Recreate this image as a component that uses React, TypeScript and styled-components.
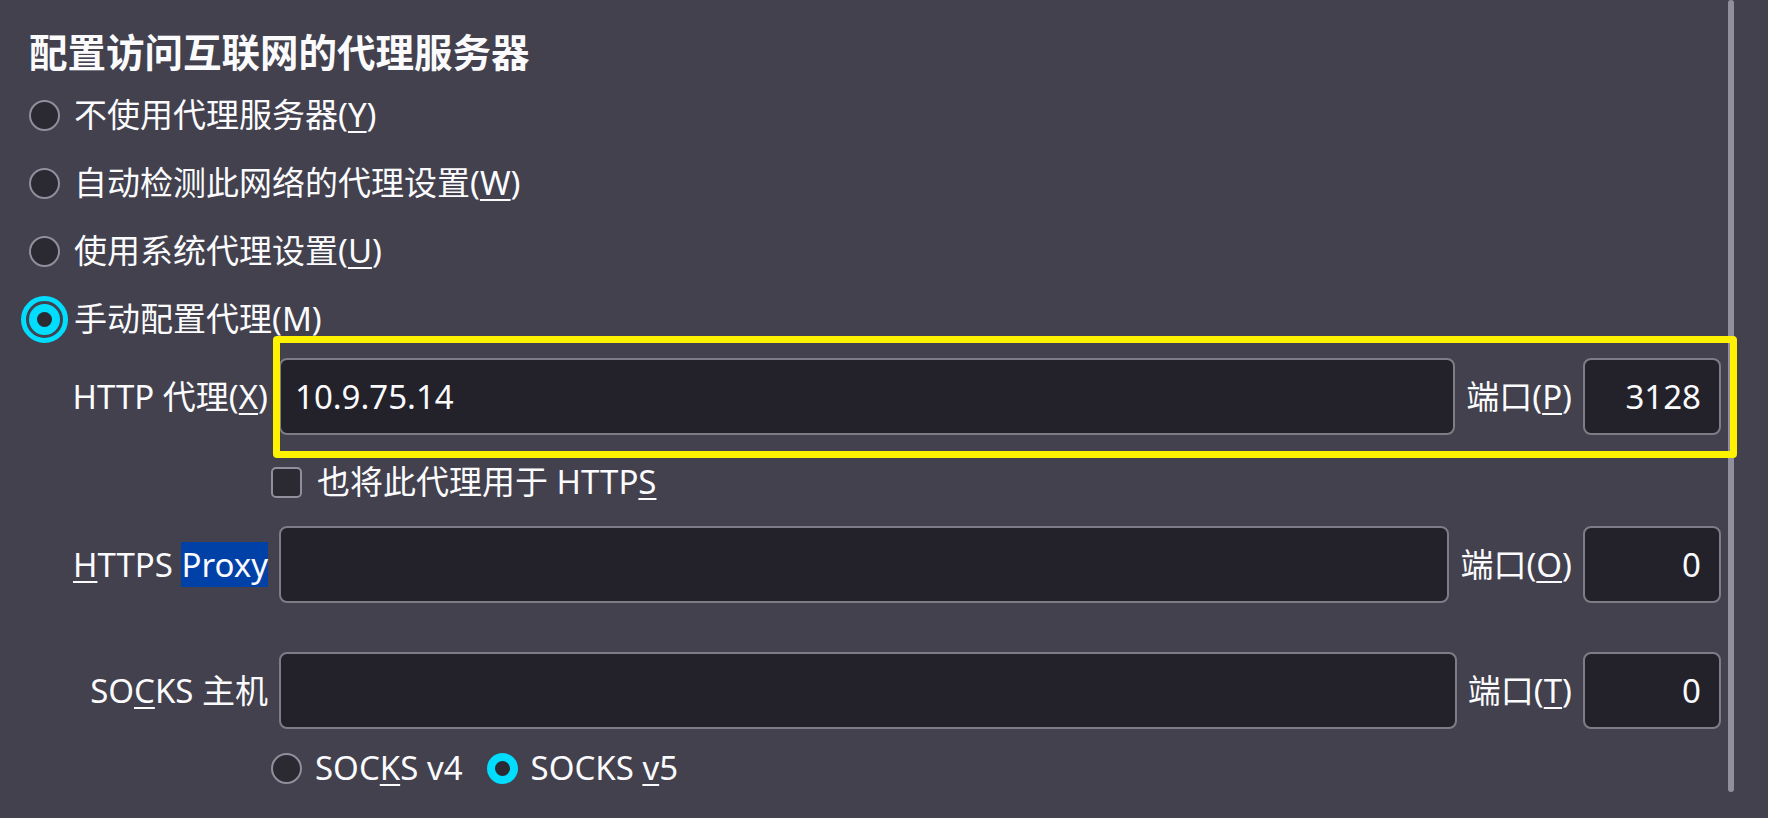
import React from "react";
import styled, { createGlobalStyle } from "styled-components";

const GlobalStyle = createGlobalStyle`
  html, body {
    margin: 0;
    padding: 0;
    background: #42414d;
  }
  body {
    font-family: "Noto Sans", "Noto Sans CJK SC", sans-serif;
    color: #fbfbfe;
    overflow: hidden;
  }
  #root {
    height: 818px;
  }
`;

const Page = styled.div`
  display: flex;
  width: 1768px;
  height: 818px;
  background: #42414d;
  overflow: hidden;
`;

const Content = styled.main`
  flex: 1;
  min-width: 0;
  display: flex;
  flex-direction: column;
  padding: 27px 7px 0 29px;
`;

const ScrollTrack = styled.div`
  width: 6px;
  margin-right: 34px;
  display: flex;
  flex-direction: column;
`;

const ScrollThumb = styled.div`
  height: 792px;
  border-radius: 3px;
  background: #8f8f9d;
`;

const Heading = styled.h2`
  margin: 0;
  font-size: 38.5px;
  line-height: 50px;
  font-weight: 600;
  white-space: nowrap;
`;

const RadioGroup = styled.div`
  display: flex;
  flex-direction: column;
  margin-top: 4px;
`;

const OptionRow = styled.label`
  display: flex;
  align-items: center;
  gap: 14px;
  height: 68px;
  font-size: 33px;
  line-height: 42px;
  white-space: nowrap;
`;

const RadioDot = styled.span<{ $checked?: boolean; $focused?: boolean }>`
  flex: none;
  display: inline-flex;
  align-items: center;
  justify-content: center;
  box-sizing: border-box;
  width: 31px;
  height: 31px;
  border-radius: 50%;
  border: 2px solid ${(p) => (p.$checked ? "#00ddff" : "#8f8f9d")};
  background: ${(p) => (p.$checked ? "#00ddff" : "#2b2a33")};
  outline: ${(p) => (p.$focused ? "5px solid #00ddff" : "none")};
  outline-offset: 3.5px;

  &::after {
    content: "";
    display: ${(p) => (p.$checked ? "block" : "none")};
    width: 15px;
    height: 15px;
    border-radius: 50%;
    background: #2b2a33;
  }
`;

const Key = styled.span`
  text-decoration: underline;
  text-decoration-thickness: 2px;
  text-underline-offset: 4px;
`;

const FieldRow = styled.div<{ $mt?: number }>`
  position: relative;
  display: flex;
  align-items: center;
  gap: 11px;
  margin-top: ${(p) => p.$mt ?? 0}px;
`;

const FieldLabel = styled.label`
  flex: none;
  width: 239px;
  text-align: right;
  font-size: 33px;
  line-height: 42px;
  white-space: nowrap;
`;

const Selected = styled.span`
  background: #0041a8;
`;

const TextInput = styled.input<{ $align?: "left" | "right" }>`
  box-sizing: border-box;
  height: 77px;
  margin: 0;
  border: 2px solid #7e7d87;
  border-radius: 8px;
  background: #23222b;
  color: #fbfbfe;
  font-family: "Noto Sans", "Noto Sans CJK SC", sans-serif;
  font-size: 33px;
  text-align: ${(p) => p.$align ?? "left"};
  outline: none;
`;

const HostInput = styled(TextInput)`
  flex: 1;
  min-width: 0;
  padding: 0 14px;
`;

const PortInput = styled(TextInput)`
  flex: none;
  width: 138px;
  padding: 0 18px 0 10px;
`;

const PortLabel = styled.label`
  flex: none;
  font-size: 33px;
  line-height: 42px;
  white-space: nowrap;
`;

const Annotation = styled.div`
  position: absolute;
  left: 244px;
  right: -16px;
  top: -22px;
  bottom: -23px;
  border: 7px solid #fff200;
  border-radius: 4px;
  pointer-events: none;
  z-index: 2;
`;

const CheckRow = styled.label`
  display: flex;
  align-items: center;
  gap: 15px;
  height: 91px;
  padding: 3px 0 0 242px;
  box-sizing: border-box;
  font-size: 33px;
  line-height: 42px;
  white-space: nowrap;
`;

const CheckBox = styled.span`
  flex: none;
  box-sizing: border-box;
  width: 31px;
  height: 31px;
  border: 2px solid #8f8f9d;
  border-radius: 5px;
  background: #2b2a33;
`;

const VersionRow = styled.div`
  display: flex;
  align-items: center;
  gap: 24px;
  height: 78px;
  padding-left: 242px;
`;

const VersionOption = styled.label`
  display: inline-flex;
  align-items: center;
  gap: 13px;
  font-size: 33px;
  line-height: 42px;
  white-space: nowrap;
`;

export default function App() {
  return (
    <>
      <GlobalStyle />
      <Page>
        <Content>
          <Heading>配置访问互联网的代理服务器</Heading>
          <RadioGroup>
            <OptionRow>
              <RadioDot />
              <span>
                不使用代理服务器(<Key>Y</Key>)
              </span>
            </OptionRow>
            <OptionRow>
              <RadioDot />
              <span>
                自动检测此网络的代理设置(<Key>W</Key>)
              </span>
            </OptionRow>
            <OptionRow>
              <RadioDot />
              <span>
                使用系统代理设置(<Key>U</Key>)
              </span>
            </OptionRow>
            <OptionRow>
              <RadioDot $checked $focused />
              <span>手动配置代理(M)</span>
            </OptionRow>
          </RadioGroup>

          <FieldRow $mt={5}>
            <FieldLabel>
              HTTP 代理(<Key>X</Key>)
            </FieldLabel>
            <HostInput defaultValue="10.9.75.14" />
            <PortLabel>
              端口(<Key>P</Key>)
            </PortLabel>
            <PortInput $align="right" defaultValue="3128" />
            <Annotation />
          </FieldRow>

          <CheckRow>
            <CheckBox />
            <span>
              也将此代理用于 HTTP<Key>S</Key>
            </span>
          </CheckRow>

          <FieldRow>
            <FieldLabel>
              <Key>H</Key>TTPS <Selected>Proxy</Selected>
            </FieldLabel>
            <HostInput defaultValue="" />
            <PortLabel>
              端口(<Key>O</Key>)
            </PortLabel>
            <PortInput $align="right" defaultValue="0" />
          </FieldRow>

          <FieldRow $mt={49}>
            <FieldLabel>
              SO<Key>C</Key>KS 主机
            </FieldLabel>
            <HostInput defaultValue="" />
            <PortLabel>
              端口(<Key>T</Key>)
            </PortLabel>
            <PortInput $align="right" defaultValue="0" />
          </FieldRow>

          <VersionRow>
            <VersionOption>
              <RadioDot />
              <span>
                SOC<Key>K</Key>S v4
              </span>
            </VersionOption>
            <VersionOption>
              <RadioDot $checked />
              <span>
                SOCKS <Key>v</Key>5
              </span>
            </VersionOption>
          </VersionRow>
        </Content>
        <ScrollTrack>
          <ScrollThumb />
        </ScrollTrack>
      </Page>
    </>
  );
}
